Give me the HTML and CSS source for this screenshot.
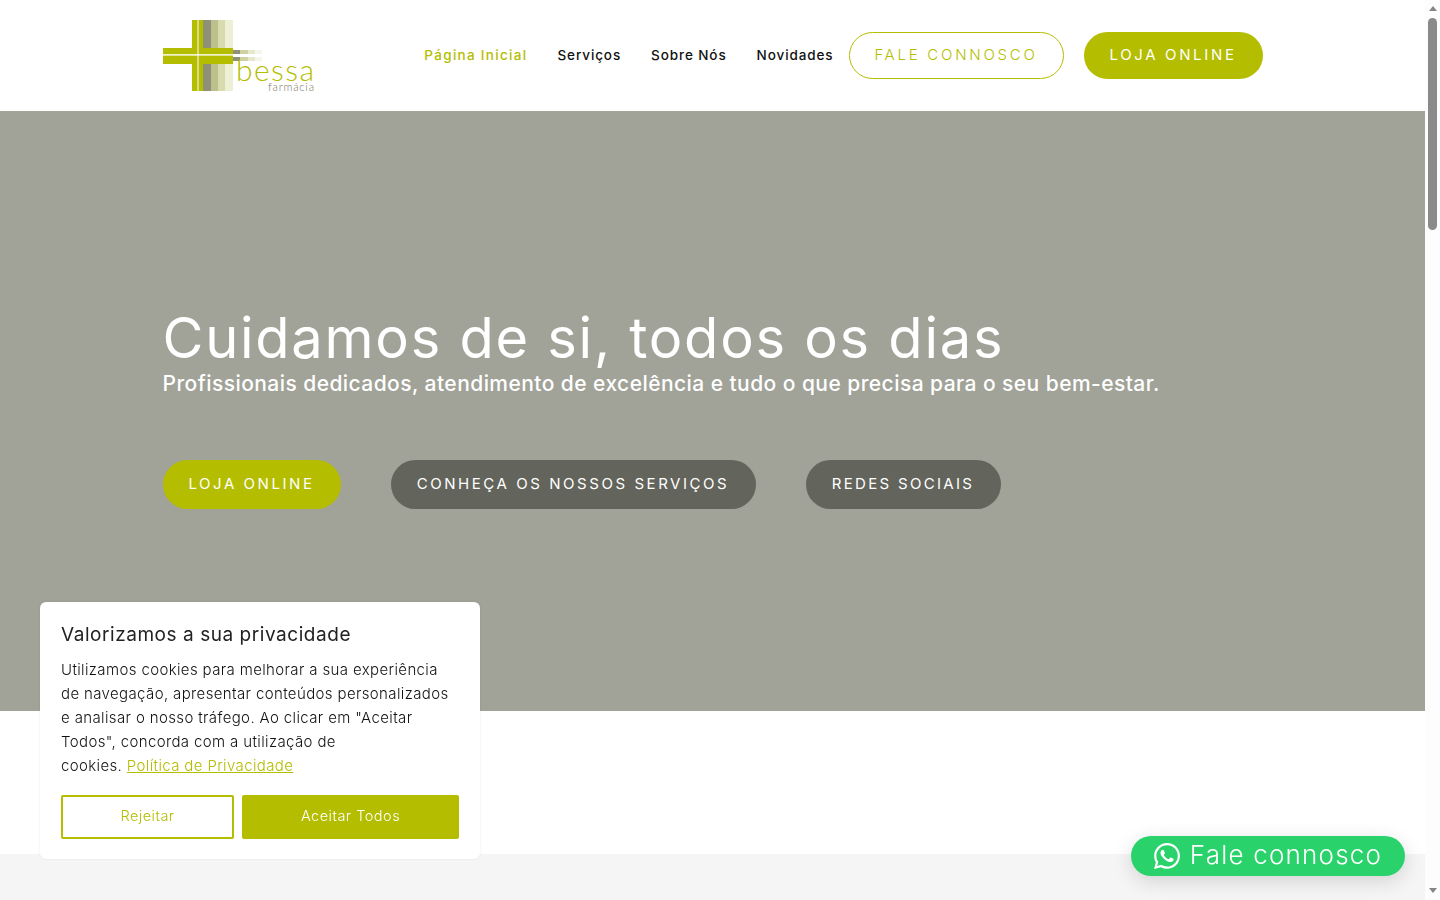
FILE: index.html
```html
<!DOCTYPE html>
<html lang="pt">
<head>
    <meta charset="UTF-8">
    <meta name="viewport" content="width=device-width, initial-scale=1.0">
    <title>Farmácia Bessa</title>
    <link rel="stylesheet" href="styles.css">
</head>
<body>
    <header class="site-header">
        <div class="container header-row">
            <a href="#" class="logo">
                <svg width="151" height="76" viewBox="0 0 151 76">
                    <rect x="29" y="0" width="11" height="71" fill="#b4bd00"/>
                    <rect x="40" y="0" width="8" height="71" fill="#8f9078"/>
                    <rect x="48" y="0" width="7" height="71" fill="#bcc08a"/>
                    <rect x="55" y="0" width="7" height="71" fill="#d8dab0"/>
                    <rect x="62" y="0" width="8" height="71" fill="#eef0d6"/>
                    <rect x="0" y="28" width="70" height="16" fill="#b4bd00"/>
                    <rect x="70" y="30" width="7" height="4" fill="#8f9078"/>
                    <rect x="70" y="37" width="7" height="4" fill="#8f9078"/>
                    <rect x="77" y="30" width="8" height="4" fill="#cfd2a0"/>
                    <rect x="77" y="37" width="8" height="4" fill="#cfd2a0"/>
                    <rect x="85" y="30" width="7" height="4" fill="#e6e7cf"/>
                    <rect x="85" y="37" width="7" height="4" fill="#e6e7cf"/>
                    <rect x="92" y="30" width="7" height="4" fill="#f5f5ea"/>
                    <rect x="92" y="37" width="7" height="4" fill="#f5f5ea"/>
                    <rect x="34.5" y="0" width="1" height="71" fill="#fff"/>
                    <rect x="0" y="34.2" width="70" height="1.4" fill="#fff"/>
                    <text x="73" y="61" class="logo-name" textLength="78" lengthAdjust="spacing">bessa</text>
                    <text x="105" y="71" class="logo-sub" textLength="46" lengthAdjust="spacing">farmácia</text>
                </svg>
            </a>
            <nav class="main-nav">
                <a href="#" class="active">Página Inicial</a>
                <a href="#">Serviços</a>
                <a href="#">Sobre Nós</a>
                <a href="#">Novidades</a>
            </nav>
            <div class="header-buttons">
                <a href="#" class="pill pill-outline">FALE CONNOSCO</a>
                <a href="#" class="pill pill-solid">LOJA ONLINE</a>
            </div>
        </div>
    </header>

    <section class="hero">
        <div class="container">
            <h1>Cuidamos de si, todos os dias</h1>
            <p class="hero-sub">Profissionais dedicados, atendimento de excelência e tudo o que precisa para o seu bem-estar.</p>
            <div class="hero-buttons">
                <a href="#" class="hero-btn hero-btn-green">LOJA ONLINE</a>
                <a href="#" class="hero-btn hero-btn-services">CONHEÇA OS NOSSOS SERVIÇOS</a>
                <a href="#" class="hero-btn hero-btn-social">REDES SOCIAIS</a>
            </div>
        </div>
    </section>

    <section class="spacer"></section>
    <section class="grey-band"></section>

    <div class="cookie-box">
        <h2>Valorizamos a sua privacidade</h2>
        <p>Utilizamos cookies para melhorar a sua experiência<br>de navegação, apresentar conteúdos personalizados<br>e analisar o nosso tráfego. Ao clicar em "Aceitar<br>Todos", concorda com a utilização de<br>cookies. <a href="#">Política de Privacidade</a></p>
        <div class="cookie-buttons">
            <button class="btn-reject">Rejeitar</button>
            <button class="btn-accept">Aceitar Todos</button>
        </div>
    </div>

    <a href="#" class="whatsapp">
        <svg width="26" height="26" viewBox="0 0 24 24" fill="currentColor">
            <path d="M17.47 14.38c-.3-.15-1.75-.86-2.02-.96-.27-.1-.47-.15-.67.15-.2.3-.76.96-.94 1.16-.17.2-.35.22-.64.07-.3-.15-1.25-.46-2.39-1.47-.88-.79-1.48-1.76-1.65-2.06-.17-.3-.02-.46.13-.6.13-.14.3-.35.45-.52.15-.17.2-.3.3-.5.1-.2.05-.37-.02-.52-.08-.15-.67-1.61-.92-2.21-.24-.58-.49-.5-.67-.51h-.57c-.2 0-.52.07-.79.37-.27.3-1.04 1.02-1.04 2.48s1.07 2.88 1.21 3.07c.15.2 2.1 3.2 5.08 4.49.71.3 1.26.49 1.7.63.71.22 1.36.19 1.87.12.57-.09 1.75-.72 2-1.41.25-.7.25-1.29.17-1.41-.07-.13-.27-.2-.57-.35zM12.05 21.78h-.01a9.87 9.87 0 0 1-5.03-1.38l-.36-.21-3.74.98 1-3.65-.24-.37a9.86 9.86 0 0 1-1.51-5.26c0-5.45 4.44-9.88 9.89-9.88 2.64 0 5.12 1.03 6.99 2.9a9.83 9.83 0 0 1 2.89 6.99c0 5.45-4.44 9.88-9.88 9.88zm8.41-18.3A11.82 11.82 0 0 0 12.05 0C5.5 0 .16 5.34.16 11.89c0 2.1.55 4.14 1.59 5.95L.06 24l6.3-1.65a11.88 11.88 0 0 0 5.68 1.45h.01c6.55 0 11.89-5.34 11.89-11.89 0-3.18-1.24-6.16-3.48-8.41z"/>
        </svg>
        <span>Fale connosco</span>
    </a>

    <div class="scrollbar">
        <span class="arrow-up"></span>
        <span class="thumb"></span>
        <span class="arrow-down"></span>
    </div>
</body>
</html>
```

FILE: styles.css
```css
* {
    margin: 0;
    padding: 0;
    box-sizing: border-box;
}

body {
    font-family: "Inter", "Noto Sans", sans-serif;
    color: #111;
    background: #fff;
    padding-right: 15px;
}

a {
    text-decoration: none;
}

.container {
    width: 1100px;
    margin: 0 auto;
}

.site-header {
    height: 111px;
    background: #fff;
}

.header-row {
    height: 100%;
    display: flex;
    align-items: flex-start;
    padding-top: 32px;
}

.logo {
    display: flex;
    margin-top: -12px;
}

.logo-name {
    font-family: "Lato", sans-serif;
    font-weight: 300;
    font-size: 30px;
    fill: #b4bd00;
}

.logo-sub {
    font-family: "Lato", sans-serif;
    font-weight: 300;
    font-size: 11px;
    fill: #77785f;
}

.main-nav {
    display: flex;
    align-items: center;
    gap: 30px;
    height: 45px;
    margin-left: auto;
    font-size: 13.5px;
    font-weight: 500;
    letter-spacing: 0.9px;
}

.main-nav a {
    color: #111;
}

.main-nav a.active {
    color: #b4bd00;
    letter-spacing: 1.3px;
}

.header-buttons {
    display: flex;
    gap: 20px;
    margin-left: 15px;
}

.pill {
    display: flex;
    align-items: center;
    justify-content: center;
    height: 47px;
    padding-bottom: 2px;
    border-radius: 24px;
    font-size: 15px;
    font-weight: 300;
    letter-spacing: 2.75px;
}

.pill-outline {
    width: 215px;
    border: 1px solid #b4bd00;
    color: #b4bd00;
}

.pill-solid {
    width: 179px;
    background: #b4bd00;
    color: #fff;
    font-weight: 400;
    letter-spacing: 2.65px;
}

.hero {
    height: 600px;
    background: #a1a298;
    color: #fff;
    padding-top: 195px;
}

.hero h1 {
    font-size: 56px;
    font-weight: 400;
    line-height: 64px;
    letter-spacing: 1.74px;
}

.hero-sub {
    font-size: 21px;
    font-weight: 500;
    line-height: 28px;
    letter-spacing: 0.44px;
}

.hero-buttons {
    display: flex;
    gap: 50px;
    margin-top: 62px;
}

.hero-btn {
    display: flex;
    align-items: center;
    justify-content: center;
    height: 49px;
    padding-bottom: 2px;
    border-radius: 25px;
    background: #63645b;
    color: #fff;
    font-size: 15px;
    letter-spacing: 2.55px;
}

.hero-btn-green {
    width: 178px;
    background: #b4bd00;
}

.hero-btn-services {
    width: 365px;
}

.hero-btn-social {
    width: 195px;
    letter-spacing: 2.3px;
}

.spacer {
    height: 143px;
    background: #fff;
}

.grey-band {
    height: 2800px;
    background: #f5f5f5;
}

.cookie-box {
    position: fixed;
    left: 40px;
    bottom: 41px;
    width: 440px;
    height: 257px;
    padding: 21px;
    background: #fff;
    border-radius: 6px;
    box-shadow: 0 0 3px rgba(0, 0, 0, 0.08);
}

.cookie-box h2 {
    font-size: 19px;
    font-weight: 400;
    line-height: 24px;
    letter-spacing: 0.55px;
    color: #222;
}

.cookie-box p {
    margin-top: 11px;
    font-size: 15px;
    line-height: 24px;
    font-weight: 300;
    letter-spacing: 0.37px;
    color: #111;
}

.cookie-box p a {
    color: #b4bd00;
    text-decoration: underline;
}

.cookie-buttons {
    display: flex;
    gap: 8px;
    margin-top: 17px;
}

.cookie-buttons button {
    height: 44px;
    padding-bottom: 3px;
    border-radius: 2px;
    font-family: inherit;
    font-size: 14.5px;
    font-weight: 300;
    letter-spacing: 0.5px;
}

.btn-reject {
    width: 173px;
    background: #fff;
    border: 2px solid #b4bd00;
    color: #b4bd00;
}

.btn-accept {
    width: 217px;
    background: #b4bd00;
    border: none;
    color: #fff;
}

.whatsapp {
    position: fixed;
    right: 35px;
    bottom: 24px;
    width: 274px;
    height: 40px;
    display: flex;
    align-items: center;
    justify-content: center;
    gap: 10px;
    background: #29d26a;
    color: #fff;
    border-radius: 20px;
    font-size: 26px;
    font-weight: 300;
    letter-spacing: 1.2px;
    box-shadow: 0 5px 20px rgba(0, 0, 0, 0.14);
}

.whatsapp span {
    margin-top: -4px;
}

.scrollbar {
    position: fixed;
    top: 0;
    right: 0;
    bottom: 0;
    width: 15px;
    background: #fdfdfd;
    display: flex;
    flex-direction: column;
    align-items: center;
}

.arrow-up {
    margin-top: 6px;
    border-left: 4.5px solid transparent;
    border-right: 4.5px solid transparent;
    border-bottom: 5px solid #858585;
}

.thumb {
    width: 9px;
    height: 212px;
    margin-top: 7px;
    border-radius: 5px;
    background: #8a8a8a;
}

.arrow-down {
    margin-top: auto;
    margin-bottom: 7px;
    border-left: 4.5px solid transparent;
    border-right: 4.5px solid transparent;
    border-top: 5px solid #858585;
}
```
